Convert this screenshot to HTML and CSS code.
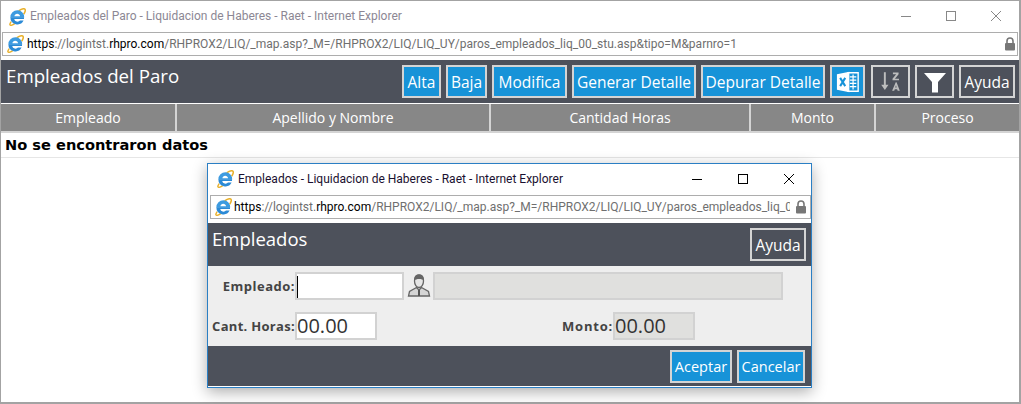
FILE: index.html
```html
<!DOCTYPE html>
<html lang="es">
<head>
<meta charset="utf-8">
<title>Empleados del Paro</title>
<link rel="stylesheet" href="styles.css">
</head>
<body>
<svg class="defs" width="0" height="0" aria-hidden="true">
  <defs>
    <symbol id="ie" viewBox="0 0 18 18">
      <path d="M3.200 13.600C.2 17.800 2.600 18.400 6.800 15.600" fill="none" stroke="#e8b02a" stroke-width="1.400"/>
      <path d="M10.600 2.800C14.600 0 17.800 0 17.200 3c-.2 1-.8 2.200-1.600 3.200" fill="none" stroke="#e8b02a" stroke-width="1.500"/>
      <path d="M9.600 2.200a7 7 0 0 0-7.200 7.200h13.800A6.800 6.800 0 0 0 9.600 2.200Z" fill="#3d9be0"/>
      <path d="M2.400 9.200a7 7 0 0 0 13.200 3.400h-3.600a3.400 3.400 0 0 1-5.800-1.600h9.800V9.200Z" fill="#2b8ad6"/>
      <path d="M6.400 8.300c.2-3.400 5.300-3.400 5.700 0Z" fill="#fff"/>
    </symbol>
    <symbol id="lock" viewBox="0 0 12 14">
      <path d="M3 6V4a3 3 0 0 1 6 0v2" fill="none" stroke="#777" stroke-width="1.600"/>
      <rect x="1" y="6" width="10" height="7.500" rx="1" fill="#777"/>
    </symbol>
  </defs>
</svg>

<div class="window">
  <div class="titlebar">
    <svg class="ie"><use href="#ie"/></svg>
    <span class="wintitle">Empleados del Paro - Liquidacion de Haberes - Raet - Internet Explorer</span>
    <div class="wincontrols muted">
      <svg width="12" height="12" viewBox="0 0 12 12"><path d="M1 6.500H11" stroke="currentColor"/></svg>
      <svg width="12" height="12" viewBox="0 0 12 12"><rect x="1.500" y="1.500" width="9" height="9" fill="none" stroke="currentColor"/></svg>
      <svg width="12" height="12" viewBox="0 0 12 12"><path d="M1 1L11 11M11 1L1 11" stroke="currentColor"/></svg>
    </div>
  </div>
  <div class="urlbar">
    <svg class="ie"><use href="#ie"/></svg>
    <span class="url"><b>https</b>://logintst.<b>rhpro.com</b>/RHPROX2/LIQ/_map.asp?_M=/RHPROX2/LIQ/LIQ_UY/paros_empleados_liq_00_stu.asp&amp;tipo=M&amp;parnro=1</span>
    <svg class="lock"><use href="#lock"/></svg>
  </div>

  <header class="bar">
    <h1>Empleados del Paro</h1>
    <nav class="actions">
      <a class="btn primary w39">Alta</a>
      <a class="btn primary w41">Baja</a>
      <a class="btn primary w75">Modifica</a>
      <a class="btn primary w124">Generar Detalle</a>
      <a class="btn primary w124">Depurar Detalle</a>
      <a class="btn primary w35 excel">
        <svg width="26" height="24" viewBox="0 0 28 26">
          <path d="M14 3H25V23H14Z" fill="none" stroke="#fff" stroke-width="1.500"/>
          <path d="M16 7.500H23M16 11H23M16 14.500H23M16 18H23M19.500 5V21" stroke="#fff" stroke-width="1.300"/>
          <path d="M2 4.500L15.500 2V24L2 21.500Z" fill="#fff"/>
          <path d="M5.500 8.500L11 17.500M11 8.500L5.500 17.500" stroke="#1793d8" stroke-width="2.200"/>
        </svg>
      </a>
      <a class="btn w39">
        <svg width="21" height="23" viewBox="1 1 26 25">
          <path d="M7 2V19" stroke="#bdbdbd" stroke-width="2.400"/>
          <path d="M2.500 17.500H11.500L7 24Z" fill="#bdbdbd"/>
          <path d="M17 2.500H24V4.500L19.500 10H24.500V12H16.500V10L21 4.500H17Z" fill="#bdbdbd"/>
          <path d="M20.500 14.500L16 25H18.600L19.300 23H22.200L22.900 25H25.500L21.500 14.500ZM19.900 21L20.800 18L21.600 21Z" fill="#bdbdbd" fill-rule="evenodd"/>
        </svg>
      </a>
      <a class="btn w39">
        <svg width="26" height="24" viewBox="0 0 26 24"><path d="M2 3H24L16 12V22.500H10V12Z" fill="#fff"/></svg>
      </a>
      <a class="btn w56">Ayuda</a>
    </nav>
  </header>

  <table class="grid">
    <colgroup><col class="c1"><col class="c2"><col class="c3"><col class="c4"><col class="c5"></colgroup>
    <thead><tr><th>Empleado</th><th>Apellido y Nombre</th><th>Cantidad Horas</th><th>Monto</th><th>Proceso</th></tr></thead>
    <tbody><tr><td colspan="5">No se encontraron datos</td></tr></tbody>
  </table>
</div>

<section class="dialog">
  <div class="titlebar dlgtitle">
    <svg class="ie"><use href="#ie"/></svg>
    <span class="wintitle">Empleados - Liquidacion de Haberes - Raet - Internet Explorer</span>
    <div class="wincontrols">
      <svg width="12" height="12" viewBox="0 0 12 12"><path d="M1 6.500H11" stroke="currentColor"/></svg>
      <svg width="12" height="12" viewBox="0 0 12 12"><rect x="1.500" y="1.500" width="9" height="9" fill="none" stroke="currentColor"/></svg>
      <svg width="12" height="12" viewBox="0 0 12 12"><path d="M1 1L11 11M11 1L1 11" stroke="currentColor"/></svg>
    </div>
  </div>
  <div class="urlbar dlgurl">
    <svg class="ie"><use href="#ie"/></svg>
    <span class="url"><b>https</b>://logintst.<b>rhpro.com</b>/RHPROX2/LIQ/_map.asp?_M=/RHPROX2/LIQ/LIQ_UY/paros_empleados_liq_02</span>
    <svg class="lock"><use href="#lock"/></svg>
  </div>
  <header class="dlgbar">
    <h2>Empleados</h2>
    <a class="btn w56">Ayuda</a>
  </header>
  <form class="form">
    <div class="row">
      <label class="lbl l1">Empleado:</label>
      <div class="field f-emp"><span class="caret"></span></div>
      <svg class="person" width="24" height="26" viewBox="0 0 24 26">
        <path d="M7.500 8C7.500 3.500 9.500 2 12 2s4.500 1.500 4.500 6c0 3.500-2 6.500-4.500 6.500S7.500 11.500 7.500 8Z" fill="#e6e6e6" stroke="#666" stroke-width="1.300"/>
        <path d="M7.300 7.500C7 3 9 1.500 12 1.500s5 1.500 4.700 6C15.500 5.500 9 5.500 7.300 7.500Z" fill="#666"/>
        <path d="M9.500 14.500L2.500 18.500L1.500 23H22.500L21.500 18.500L14.500 14.500L12 17Z" fill="#d5d5d5" stroke="#666" stroke-width="1.300"/>
        <path d="M12 17V23" stroke="#555" stroke-width="2"/>
      </svg>
      <div class="field off f-name"></div>
    </div>
    <div class="row r2">
      <label class="lbl l2">Cant. Horas:</label>
      <div class="field f-num">00.00</div>
      <label class="lbl l3">Monto:</label>
      <div class="field off f-num">00.00</div>
    </div>
  </form>
  <footer class="dlgfoot">
    <a class="btn primary w62">Aceptar</a>
    <a class="btn primary w68">Cancelar</a>
  </footer>
</section>
</body>
</html>
```
FILE: styles.css
```css
* { box-sizing: border-box; }
html, body { margin: 0; padding: 0; height: 100%; overflow: hidden; background: #fff; }
body { font-family: "Open Sans", "Noto Sans", sans-serif; color: #000; }
.defs { position: absolute; }

.window { height: 404px; border: 1px solid #a3a3a3; border-width: 1px 2px 2px 1px; background: #fff; }

.titlebar { display: flex; align-items: center; height: 31px; padding: 0 0 0 7px; font-family: Roboto, sans-serif; }
.ie { width: 18px; height: 18px; flex: none; }
.wintitle { margin-left: 4px; padding-bottom: 1px; font-size: 12px; color: #8c8794; white-space: nowrap; }
.wincontrols { display: flex; gap: 33px; margin-left: auto; padding: 0 17px 2px 0; color: #000; }
.muted { color: #888; }

.urlbar { display: flex; align-items: center; height: 24px; margin: 0 0 0 1px; border: 1px solid #adadad; padding: 0 1px 0 3px; width: 1016px; font-family: Roboto, sans-serif; }
.url { margin-left: 3px; font-size: 12px; color: #6f6f6f; white-space: nowrap; overflow: hidden; flex: 1; }
.url b { font-weight: 400; color: #000; }
.lock { width: 12px; height: 14px; flex: none; }

.bar { display: flex; justify-content: space-between; height: 43px; margin-top: 4px; background: #4d515b; padding: 5px 4px 0 5px; width: 1018px; }
.bar h1 { margin: -1px 0 0; font-size: 18.700px; font-weight: 400; line-height: 24px; color: #fff; }
.actions { display: flex; gap: 5px; }

.btn { display: flex; align-items: center; justify-content: center; height: 33px; padding: 0; border: 2px solid #d4d4d4; font-size: 15.500px; color: #fff; background: #4d515b; white-space: nowrap; }
.btn.primary { background: #1793d8; }
.excel { margin-right: 1px; }
.w35 { width: 35px; }
.w39 { width: 39px; }
.w41 { width: 41px; }
.w56 { width: 56px; }
.w62 { width: 62px; }
.w68 { width: 68px; }
.w75 { width: 75px; }
.w124 { width: 124px; }

.grid { table-layout: fixed; border-collapse: collapse; width: 1018px; margin-top: 1px; }
.c1 { width: 175px; } .c2 { width: 314px; } .c3 { width: 260px; } .c4 { width: 125px; } .c5 { width: 144px; }
.grid th { height: 28px; padding: 0; background: #878787; border: 1px solid #d4d4d4; border-width: 0 2px 2px 0; font-size: 14px; font-weight: 400; color: #fff; }
.grid th:last-child { border-right: 0; }
.grid td { height: 25px; padding: 0 4px; font-family: "DejaVu Sans", sans-serif; font-size: 14.600px; font-weight: 700; border-bottom: 1px solid #e6e6e6; }

.dialog { position: absolute; left: 207px; top: 163px; width: 605px; height: 225px; background: #fff; border: 1px solid #2b7fc4; box-shadow: 0 4px 14px rgba(0, 0, 0, .32); }
.dlgtitle { height: 30px; padding-left: 8px; }
.dlgtitle .wintitle { color: #1a1030; font-size: 12px; }
.dlgtitle .wincontrols { gap: 34px; padding: 0 16px 0 0; }
.dlgurl { margin: 1px 0 0 2px; width: 601px; padding-right: 3px; }
.dlgurl .url { margin: 0 5px 0 2px; }
.dlgbar { display: flex; justify-content: space-between; height: 43px; margin-top: 4px; background: #4d515b; padding: 5px 5px 0 4px; }
.dlgbar h2 { margin: -1px 0 0; font-size: 18.500px; font-weight: 400; line-height: 24px; color: #fff; }

.form { height: 80px; background: #eee; padding-top: 6px; }
.row { display: flex; align-items: center; height: 28px; }
.r2 { margin-top: 12px; }
.lbl { font-size: 13px; font-weight: 700; color: #444; letter-spacing: .5px; white-space: nowrap; text-align: right; }
.l1 { width: 87px; }
.l2 { width: 87px; letter-spacing: .3px; }
.l3 { margin-left: 185px; width: 51px; letter-spacing: .8px; }
.field { height: 28px; border: 2px solid #d2d2d2; background: #fff; font-size: 20px; line-height: 23px; color: #333; }
.off { background: #e0e0de; }
.f-emp { width: 109px; padding-top: 2px; }
.f-emp .caret { display: block; width: 1px; height: 22px; background: #000; }
.person { margin: 0 2px 0 3px; flex: none; }
.f-name { width: 350px; }
.f-num { width: 82px; }

.dlgfoot { display: flex; justify-content: flex-end; gap: 5px; height: 41px; background: #4d515b; border-bottom: 1px solid #fff; padding: 4px 6px 0 0; }
.dlgfoot .btn { font-size: 14.500px; }
```
